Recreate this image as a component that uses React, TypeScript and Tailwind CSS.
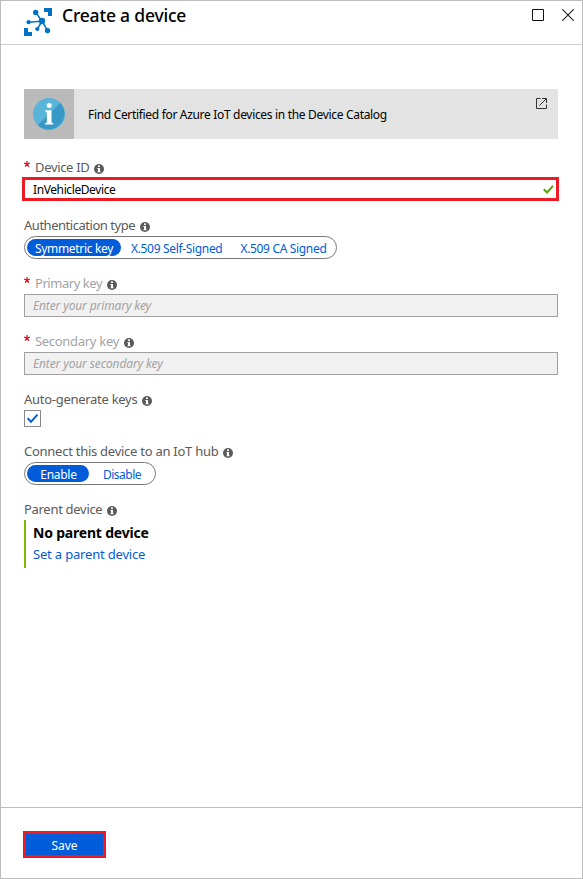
import type { ReactNode } from "react";

function InfoDot() {
  return (
    <svg className="mt-[5px] h-[10px] w-[10px] shrink-0" viewBox="0 0 10 10">
      <circle cx="5" cy="5" r="5" fill="#5a5a5a" />
      <rect x="4" y="1.4" width="2" height="1.6" fill="#fff" />
      <path d="M3.4 4H6v3.4h.8v.9H3.3v-.9H4V4.9h-.6z" fill="#fff" />
    </svg>
  );
}

function Star() {
  return (
    <svg className="mr-[5px] -mt-[5px] h-[6px] w-[6px] shrink-0" viewBox="0 0 6 6" fill="none" stroke="#e81123" strokeWidth="1.3">
      <path d="M3 0v3M.1 2.1 3 3l2.9-.9M1.2 5.7 3 3l1.8 2.7" />
    </svg>
  );
}

type FieldProps = {
  label: string;
  labelClass: string;
  required?: boolean;
  className?: string;
  children: ReactNode;
};

function Field({ label, labelClass, required, className = "h-[58px]", children }: FieldProps) {
  return (
    <div className={className}>
      <div className="flex h-[19px] items-center pb-[4px] text-[13px] leading-[18px]">
        {required && <Star />}
        <span className={`mr-[5px] whitespace-nowrap ${labelClass}`}>{label}</span>
        <InfoDot />
      </div>
      {children}
    </div>
  );
}

function KeyInput({ text }: { text: string }) {
  return (
    <div className="flex h-[23px] items-center border border-[#a0a0a0] bg-[#f1f1f1] pl-2 text-[12px] tracking-[-0.13px] text-[#a3a3a3] italic">
      {text}
    </div>
  );
}

export default function App() {
  return (
    <div className="flex h-[879px] w-[583px] flex-col border border-[#bdbdbd] bg-white font-['Noto_Sans','Open_Sans',sans-serif] text-black">
      <header className="flex h-[44px] shrink-0 border-b border-[#d0d0d0] pl-[23px]">
        <svg className="mt-[7px] h-[28px] w-[28px]" viewBox="0 0 28 28" fill="#0072c6">
          <path d="M20 0h8v8h-4V4h-4zM0 20h4v4h4v4H0z" />
          <path d="M11.7 4.4 18 13.2 4.6 14.2M18 13.2 13.4 21M18 13.2l5.5 9.2" fill="none" stroke="#0072c6" strokeWidth="1.5" />
          <circle cx="18" cy="13" r="3.2" />
          <circle cx="11.7" cy="4.4" r="2.7" />
          <circle cx="4.6" cy="14.2" r="2.1" />
          <circle cx="13.3" cy="21" r="2.1" />
          <circle cx="23.5" cy="22.6" r="2.7" />
        </svg>
        <h1 className="ml-[10px] pt-[2px] text-[17.5px] leading-[24px] font-medium tracking-[-0.2px]">Create a device</h1>
        <div className="mr-[8px] ml-auto flex gap-[18px] pt-[8px]">
          <svg className="h-[12px] w-[12px]" viewBox="0 0 12 12" fill="none" stroke="#111">
            <path d="M.5.5h11v11H.5z" />
          </svg>
          <svg className="h-[12px] w-[12px]" viewBox="0 0 12 12" fill="none" stroke="#222" strokeWidth="1.1">
            <path d="m.2.2 11.6 11.6M11.8.2.2 11.8" />
          </svg>
        </div>
      </header>

      <main className="flex-1 px-[23px] pt-[44px] pr-[24px]">
        <div className="mb-5 flex h-[50px] bg-[#e3e3e3]">
          <div className="flex w-[50px] items-center justify-center bg-[#bababa]">
            <svg className="h-[32px] w-[32px]" viewBox="0 0 32 32">
              <circle cx="16" cy="16" r="16" fill="#59b4d9" />
              <path d="M27.3 4.7A16 16 0 0 1 4.7 27.3z" fill="#3999c6" />
              <circle cx="16.2" cy="7.6" r="2.5" fill="#fff" />
              <path d="M12.2 12.3h6.3v12.2l1.8.8v1.2h-8.3v-1.2l1.9-.8V14.4l-1.7-.8z" fill="#fff" />
            </svg>
          </div>
          <span className="ml-[14px] self-center pt-[2px] text-[12px] tracking-[-0.32px] whitespace-nowrap">Find Certified for Azure IoT devices in the Device Catalog</span>
          <svg className="mt-[9px] mr-[11px] ml-auto h-[11px] w-[11px]" viewBox="0 0 11 11" fill="none" stroke="#333">
            <path d="M4.5.5h-4v10h10V6.5M6 .5h4.5V5M10.5.5 3.5 7.5" />
          </svg>
        </div>

        <Field label="Device ID" labelClass="text-[#5a5a5a] tracking-[-0.33px]" required>
          <div className="-mt-px -mr-px -ml-[2px] flex h-[24px] items-center border-3 border-[#ed1c24] pr-[2px] pl-[8px] text-[12px]">
            <span className="pt-[2px] tracking-[-0.4px]">InVehicleDevice</span>
            <svg className="mt-px ml-auto h-[9px] w-[11px]" viewBox="0 0 11 9" fill="none" stroke="#57a300" strokeWidth="2">
              <path d="m.8 4.2 3.2 3.3L10 .8" />
            </svg>
          </div>
        </Field>

        <Field label="Authentication type" labelClass="text-[#5a5a5a] tracking-[-0.47px]">
          <div className="flex h-[23px] w-[313px] items-center rounded-full border border-[#777] pl-[2px] text-[12px] tracking-[-0.33px] whitespace-nowrap text-[#015cda]">
            <span className="flex h-[17px] w-[94px] items-center justify-center rounded-full bg-[#015cda] pt-[3px] text-white">Symmetric key</span>
            <span className="ml-[10px] pt-[3px]">X.509 Self-Signed</span>
            <span className="ml-[18px] pt-[3px]">X.509 CA Signed</span>
          </div>
        </Field>

        <Field label="Primary key" labelClass="text-[#a3a3a3] tracking-[-0.45px]" required>
          <KeyInput text="Enter your primary key" />
        </Field>

        <Field label="Secondary key" labelClass="text-[#a3a3a3] tracking-[-0.3px]" required>
          <KeyInput text="Enter your secondary key" />
        </Field>

        <Field label="Auto-generate keys" labelClass="text-[#5a5a5a] tracking-[-0.28px]" className="h-[52px]">
          <div className="flex h-[17px] w-[17px] items-center justify-center border border-[#888]">
            <svg className="h-[9px] w-[11px]" viewBox="0 0 11 9" fill="none" stroke="#015cda" strokeWidth="2">
              <path d="m.5 4.2 3.5 3.6L10.5.6" />
            </svg>
          </div>
        </Field>

        <Field label="Connect this device to an IoT hub" labelClass="text-[#5a5a5a] tracking-[-0.26px]">
          <div className="flex h-[23px] w-[132px] items-center rounded-full border border-[#777] pl-[2px] text-[12px] text-[#015cda]">
            <span className="flex h-[17px] w-[62px] items-center justify-center rounded-full bg-[#015cda] pt-[3px] pl-px tracking-[-0.3px] text-white">Enable</span>
            <span className="ml-[14px] pt-[3px] tracking-[-0.5px]">Disable</span>
          </div>
        </Field>

        <Field label="Parent device" labelClass="text-[#5a5a5a] tracking-[-0.3px]">
          <div className="h-[48px] border-l-2 border-[#7fba00] pt-[2px] pl-[7px] whitespace-nowrap">
            <p className="text-[14px] leading-[21px] font-bold tracking-[-0.2px]">No parent device</p>
            <p className="pt-px text-[13px] leading-[21px] tracking-[-0.18px] text-[#015cda]">Set a parent device</p>
          </div>
        </Field>
      </main>

      <footer className="h-[71px] shrink-0 border-t border-[#bdbdbd] pt-[23px] pl-[22px]">
        <button className="flex h-[27px] w-[83px] items-center justify-center border-3 border-[#ed1c24] bg-[#015cda] pt-[3px] text-[12px] text-white">Save</button>
      </footer>
    </div>
  );
}
